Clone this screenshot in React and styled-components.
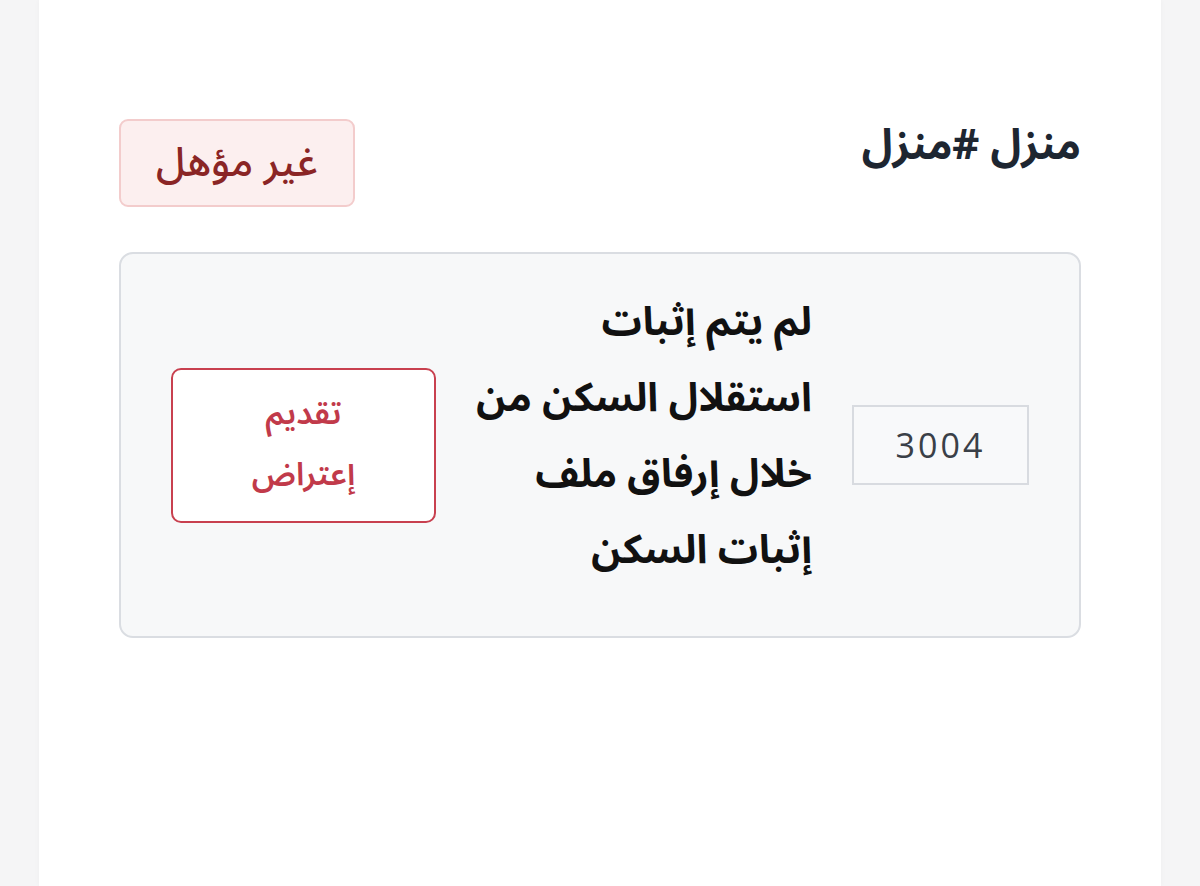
import React from "react";
import styled, { createGlobalStyle } from "styled-components";

const Global = createGlobalStyle`
  html, body { margin: 0; padding: 0; background: #f5f5f6; }
  body { font-family: "Noto Sans Arabic", "Noto Naskh Arabic", "DejaVu Sans", sans-serif; }
  * { box-sizing: border-box; }
`;

const Page = styled.div`
  direction: rtl;
  min-height: 886px;
  display: flex;
  justify-content: center;
  background: #f5f5f6;
`;

const Card = styled.main`
  width: 1122px;
  min-height: 886px;
  background: #ffffff;
  padding: 119px 80px 0 80px;
  box-shadow: 0 0 6px rgba(0,0,0,0.03);
`;

const Header = styled.div`
  display: flex;
  justify-content: space-between;
  align-items: flex-start;
`;

const Title = styled.h2`
  margin: 0;
  font-size: 42px;
  font-weight: 700;
  line-height: 54px;
  color: #1e2631;
`;

const Badge = styled.span`
  display: inline-flex;
  align-items: center;
  justify-content: center;
  height: 88px;
  padding: 0 35px;
  background: #fcefef;
  border: 2px solid #f3cccc;
  border-radius: 9px;
  color: #8a2525;
  font-size: 41px;
  font-weight: 500;
`;

const Box = styled.section`
  margin-top: 45px;
  background: #f7f8f9;
  border: 2px solid #dadde2;
  border-radius: 14px;
  padding: 39px 50px;
  display: flex;
  align-items: center;
  gap: 40px;
`;

const NumberField = styled.div`
  width: 177px;
  height: 80px;
  flex: none;
  display: flex;
  align-items: center;
  justify-content: center;
  border: 2px solid #d8dbe0;
  background: #f8f9fa;
  color: #3a4047;
  font-family: "Open Sans", "DejaVu Sans", sans-serif;
  font-size: 34px;
  letter-spacing: 3px;
  direction: ltr;
`;

const Message = styled.p`
  flex: 1;
  margin: -8px 0 8px 0;
  font-size: 40px;
  font-weight: 700;
  line-height: 76px;
  color: #111111;
`;

const Action = styled.button`
  flex: none;
  width: 265px;
  height: 155px;
  background: #ffffff;
  border: 2px solid #c8404f;
  border-radius: 10px;
  color: #c13a4a;
  font-family: inherit;
  font-size: 32px;
  font-weight: 600;
  line-height: 61px;
  direction: rtl;
  cursor: pointer;
`;

export default function App() {
  return (
    <>
      <Global />
      <Page>
        <Card>
          <Header>
            <Title>منزل #منزل</Title>
            <Badge>غير مؤهل</Badge>
          </Header>
          <Box>
            <NumberField>3004</NumberField>
            <Message>
              لم يتم إثبات
              <br />
              استقلال السكن من
              <br />
              خلال إرفاق ملف
              <br />
              إثبات السكن
            </Message>
            <Action>
              تقديم
              <br />
              إعتراض
            </Action>
          </Box>
        </Card>
      </Page>
    </>
  );
}
